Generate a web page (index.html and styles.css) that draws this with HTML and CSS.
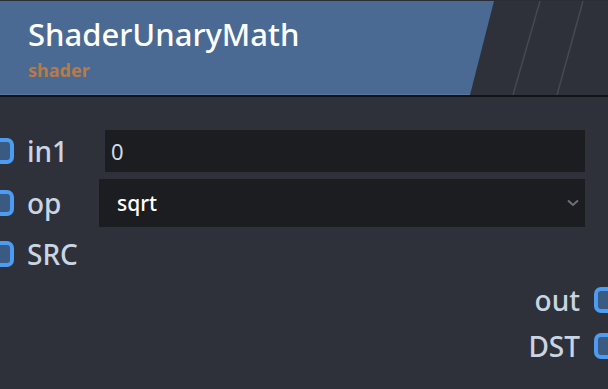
FILE: index.html
```html
<!DOCTYPE html>
<html lang="en">
<head>
    <meta charset="UTF-8">
    <title>ShaderUnaryMath</title>
    <link rel="stylesheet" href="styles.css">
</head>
<body>
<div class="node">
    <div class="node_head">
        <div class="title">ShaderUnaryMath</div>
        <div class="category">shader</div>
        <svg class="stripes" width="140" height="94" viewBox="0 0 140 94">
            <polygon points="26,0 140,0 140,94 2,94" fill="#2e3139"/>
            <line x1="72" y1="0" x2="45" y2="94" stroke="#464950" stroke-width="1.5"/>
            <line x1="115" y1="0" x2="89" y2="94" stroke="#464950" stroke-width="1.5"/>
        </svg>
    </div>
    <div class="node_body">
        <div class="row row_in1">
            <span class="port port_left"></span>
            <span class="label">in1</span>
            <div class="field field_text">0</div>
        </div>
        <div class="row row_op">
            <span class="port port_left"></span>
            <span class="label">op</span>
            <div class="field field_select">
                <span>sqrt</span>
                <svg width="12" height="8" viewBox="0 0 12 8">
                    <polyline points="1,1.5 6,6 11,1.5" fill="none" stroke="#6b6f78" stroke-width="2"/>
                </svg>
            </div>
        </div>
        <div class="row row_src">
            <span class="port port_left"></span>
            <span class="label">SRC</span>
        </div>
        <div class="row row_out">
            <span class="label">out</span>
            <span class="port port_right"></span>
        </div>
        <div class="row row_out">
            <span class="label">DST</span>
            <span class="port port_right"></span>
        </div>
    </div>
</div>
</body>
</html>
```

FILE: styles.css
```css
html, body {
    margin: 0;
    height: 100%;
    overflow: hidden;
    background: #2e3139;
}

body {
    font-family: "Noto Sans", "Noto Sans CJK SC", sans-serif;
}

.node {
    width: 608px;
    height: 389px;
    background: #2e3139;
    border-top: 1px solid #2a2e36;
    box-sizing: border-box;
}

.node_head {
    position: relative;
    height: 94px;
    background: #4a6a94;
    border-bottom: 1px solid #5878a2;
    box-shadow: 0 2px 0 #121316;
    padding: 13px 0 0 28px;
    box-sizing: border-box;
}

.title {
    color: #ffffff;
    font-size: 31px;
    font-weight: 500;
    line-height: 40px;
}

.category {
    color: #b87a48;
    font-size: 18px;
    font-weight: 700;
    line-height: 22px;
    margin-top: 5px;
}

.stripes {
    position: absolute;
    right: 0;
    top: 0;
}

.node_body {
    padding-top: 35px;
    display: flex;
    flex-direction: column;
}

.row {
    display: flex;
    align-items: center;
    height: 46px;
}

.row_in1 {
    height: 42px;
}

.row_op {
    height: 48px;
    margin-top: 7px;
}

.row_src {
    margin-top: 4px;
}

.row_out {
    justify-content: flex-end;
}

.label {
    color: #c9d5e3;
    font-size: 28px;
    font-weight: 500;
}

.port {
    width: 28px;
    height: 26px;
    border: 4px solid #4b9cf2;
    border-radius: 7px;
    background: #3b5a82;
    box-sizing: border-box;
    flex: none;
}

.port_left {
    margin-left: -14px;
    margin-right: 13px;
}

.port_right {
    margin-right: -14px;
    margin-left: 14px;
}

.field {
    background: #1b1d21;
    height: 100%;
    box-sizing: border-box;
    display: flex;
    align-items: center;
}

.field_text {
    margin-left: auto;
    width: 480px;
    margin-right: 23px;
    padding-left: 6px;
    color: #d2dbe6;
    font-size: 22px;
}

.field_select {
    margin-left: auto;
    width: 486px;
    margin-right: 23px;
    padding: 0 6px 0 18px;
    color: #ffffff;
    font-size: 21px;
    font-weight: 500;
    justify-content: space-between;
}
```
